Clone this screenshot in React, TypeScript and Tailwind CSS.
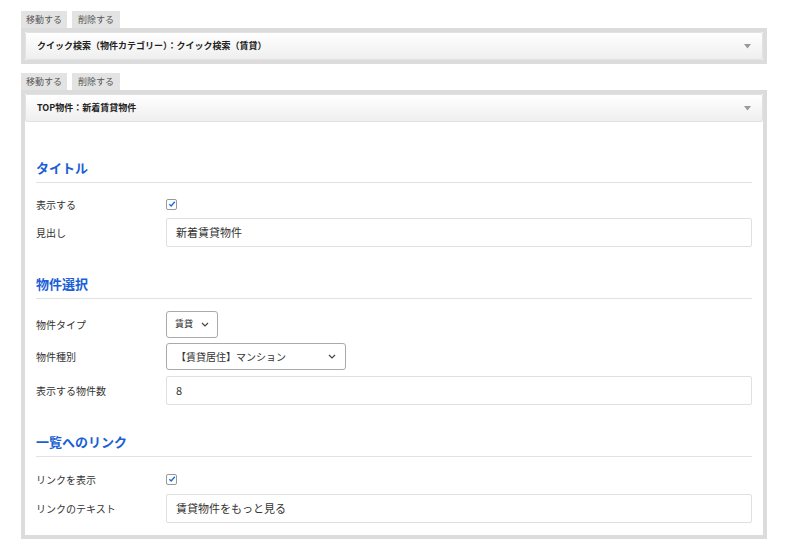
import React from "react"

const font = { fontFamily: '"Noto Sans CJK JP", "Noto Sans", sans-serif' }

function Tabs() {
  return (
    <div className="flex gap-[5px] h-[17px]">
      <span className="flex items-center px-[5px] bg-[#e3e3e3] text-[9px] text-[#555]">移動する</span>
      <span className="flex items-center px-[6px] bg-[#e3e3e3] text-[9px] text-[#555]">削除する</span>
    </div>
  )
}

function Header({ title }: { title: string }) {
  return (
    <div className="flex items-center justify-between h-[28px] pl-[11px] pr-[11px] bg-gradient-to-b from-white to-[#efefef] border border-[#e2e2e2] rounded-[2px]">
      <span className="text-[9px] font-bold text-[#222]">{title}</span>
      <svg width="7" height="5" viewBox="0 0 7 5"><path d="M0 0 L7 0 L3.5 4.5 Z" fill="#999" /></svg>
    </div>
  )
}

function Section({ title, mb = "mb-[9px]" }: { title: string; mb?: string }) {
  return (
    <div className={`pb-[5px] border-b border-[#e2e2e2] ${mb}`}>
      <h2 className="text-[13px] font-bold text-[#1a5fd6] leading-[18px]">{title}</h2>
    </div>
  )
}

function Row({ label, children, h = "h-[30px]" }: { label: string; children: React.ReactNode; h?: string }) {
  return (
    <div className={`flex items-center ${h}`}>
      <span className="w-[130px] text-[10px] text-[#333]">{label}</span>
      <div className="flex-1 flex items-center">{children}</div>
    </div>
  )
}

function Check() {
  return (
    <span className="w-[11px] h-[11px] border border-[#999] rounded-[2px] flex items-center justify-center bg-white">
      <svg width="8" height="8" viewBox="0 0 8 8"><path d="M1.3 4.2 L3.2 6 L6.8 1.8" stroke="#1a6fd6" strokeWidth="1.4" fill="none" /></svg>
    </span>
  )
}

function TextBox({ value }: { value: string }) {
  return (
    <div className="w-full h-[29px] flex items-center px-[9px] border border-[#e0e0e0] rounded-[2px] text-[11px] text-[#333]">{value}</div>
  )
}

function Chevron() {
  return (
    <svg width="8" height="5" viewBox="0 0 8 5"><path d="M1 1 L4 4 L7 1" stroke="#444" strokeWidth="1.2" fill="none" /></svg>
  )
}

export default function App() {
  return (
    <div style={font} className="w-[790px] h-[546px] bg-white pt-[11px] pl-[21px] pr-[23px]">
      <Tabs />
      <div className="border-[4px] border-[#dcdcdc]">
        <Header title="クイック検索（物件カテゴリー）：クイック検索（賃貸）" />
      </div>
      <div className="mt-[9px]">
        <Tabs />
        <div className="border-[4px] border-[#dcdcdc] bg-white">
          <Header title="TOP物件：新着賃貸物件" />
          <div className="px-[11px] pt-[37px] pb-[9px]">
            <Section title="タイトル" />
            <Row label="表示する" h="h-[24px]"><Check /></Row>
            <Row label="見出し" h="h-[33px]"><TextBox value="新着賃貸物件" /></Row>
            <div className="mt-[26px]">
              <Section title="物件選択" />
              <Row label="物件タイプ" h="h-[32px]">
                <div className="w-[52px] h-[27px] flex items-center justify-between px-[8px] border border-[#aaa] rounded-[3px] text-[9px] text-[#333]">
                  賃貸<Chevron />
                </div>
              </Row>
              <Row label="物件種別" h="h-[32px]">
                <div className="w-[180px] h-[27px] flex items-center justify-between px-[9px] border border-[#aaa] rounded-[3px] text-[10px] text-[#333]">
                  【賃貸居住】マンション<Chevron />
                </div>
              </Row>
              <Row label="表示する物件数" h="h-[36px]"><TextBox value="8" /></Row>
            </div>
            <div className="mt-[25px]">
              <Section title="一覧へのリンク" mb="mb-[11px]" />
              <Row label="リンクを表示" h="h-[22px]"><Check /></Row>
              <Row label="リンクのテキスト" h="h-[36px]"><TextBox value="賃貸物件をもっと見る" /></Row>
            </div>
          </div>
        </div>
      </div>
    </div>
  )
}
